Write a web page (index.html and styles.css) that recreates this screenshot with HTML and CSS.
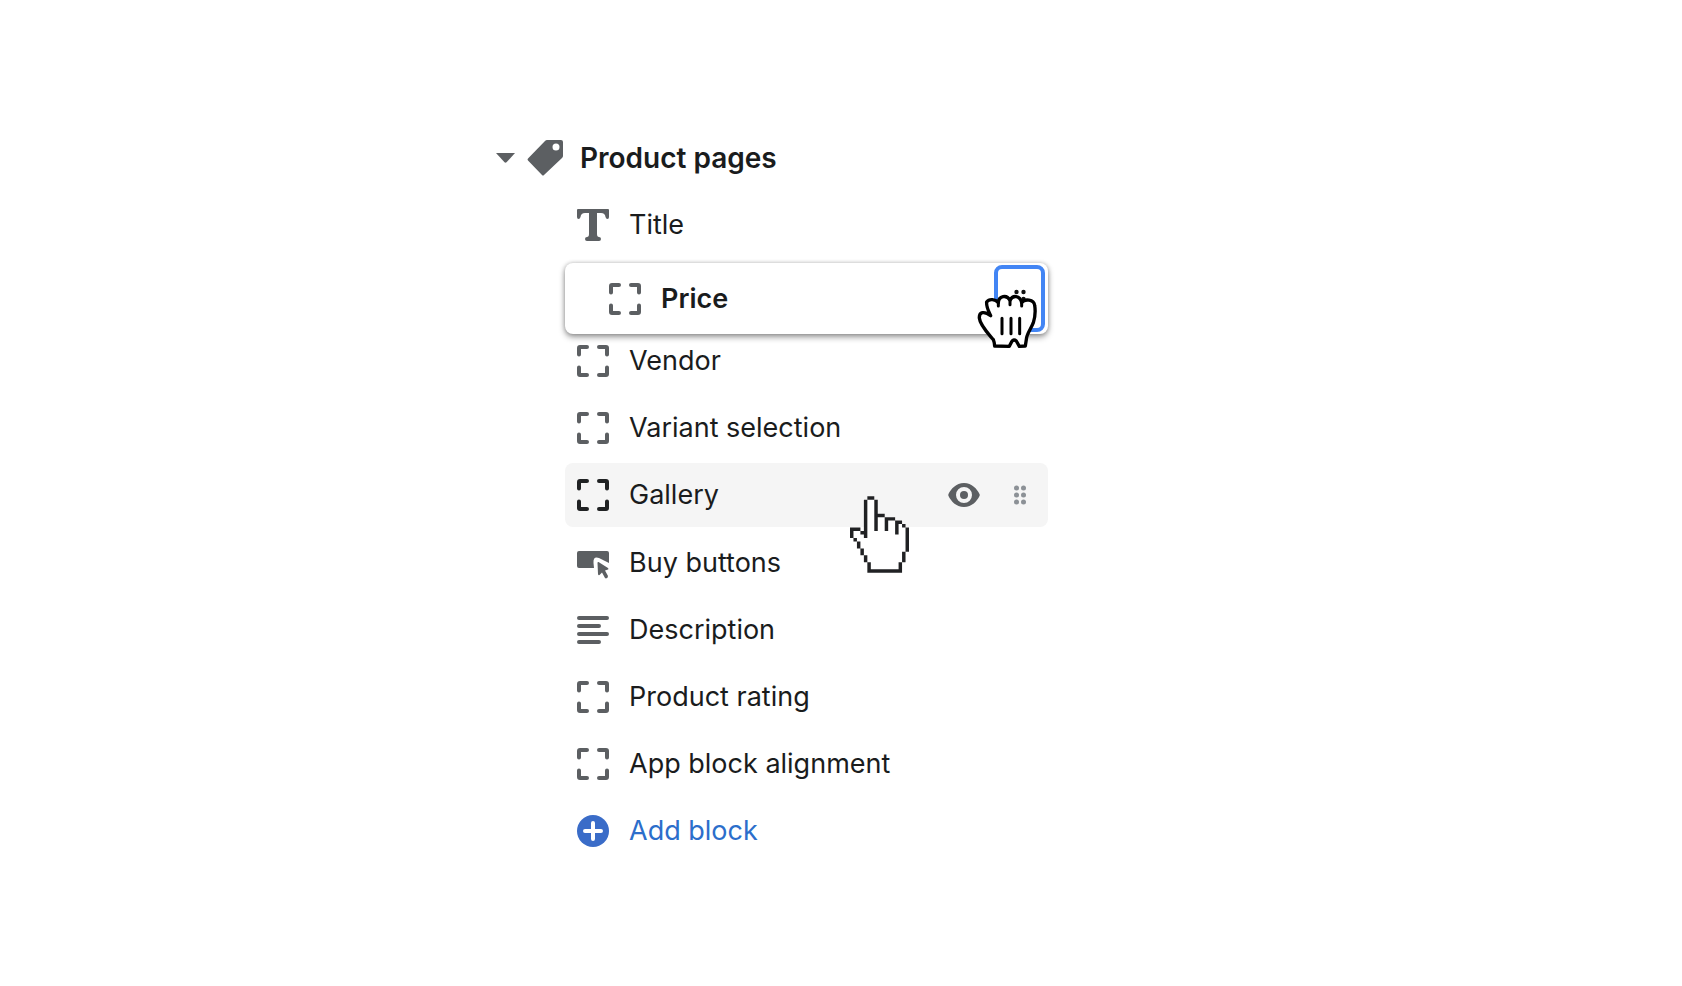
FILE: index.html
```html
<!DOCTYPE html>
<html lang="en">
<head>
<meta charset="utf-8">
<title>Product pages</title>
<link rel="stylesheet" href="styles.css">
</head>
<body>
<svg class="defs" aria-hidden="true">
  <symbol id="block" viewBox="0 0 32 32"><path d="M2 9.500V3Q2 2 3 2H10M22 2H29Q30 2 30 3V9.500M30 22.500V29Q30 30 29 30H22M10 30H3Q2 30 2 29V22.500" fill="none" stroke="currentColor" stroke-width="4" stroke-linecap="round" stroke-linejoin="round"/></symbol>
</svg>
<main class="page">
  <section class="tree">
    <h1 class="section">
      <button class="toggle" type="button" aria-expanded="true" aria-label="Collapse"><svg width="19" height="10" viewBox="0 0 19 10"><path d="M0 0H19L10.500 9.300Q9.500 10 8.500 9.300Z" fill="currentColor"/></svg></button>
      <svg class="tag" width="36" height="36" viewBox="0 0 36 36"><path fill-rule="evenodd" d="M20 0H34Q36 0 36 2V16Q36 17 35 18L17 35Q16 36 15 35L1 20.500Q0 19.500 1 18.500L18 1Q19 0 20 0ZM29 3.500a3.500 3.500 0 1 0 0 7a3.500 3.500 0 1 0 0-7Z" fill="currentColor"/></svg>
      <span>Product pages</span>
    </h1>
    <ul class="blocks">
      <li class="row"><svg class="icon" viewBox="0 0 32 32"><path d="M1 0H31Q32 0 32 1V8Q32 10 30.500 10Q29 10 28.500 8Q28 4 24 4H20V25Q20 28 22 28Q24 28 24 30Q24 32 22 32H10Q8 32 8 30Q8 28 10 28Q12 28 12 25V4H8Q4 4 3.500 8Q3 10 1.500 10Q0 10 0 8V1Q0 0 1 0Z" fill="currentColor"/></svg><span>Title</span></li>
      <li class="row lifted"><svg class="icon"><use href="#block"/></svg><span class="label">Price</span>
        <button class="handle focused" type="button" aria-label="Move Price"><svg width="12" height="20" viewBox="0 0 12 20"><g fill="currentColor"><circle cx="2.500" cy="3" r="2.200"/><circle cx="9.500" cy="3" r="2.200"/><circle cx="2.500" cy="10" r="2.200"/><circle cx="9.500" cy="10" r="2.200"/><circle cx="2.500" cy="17" r="2.200"/><circle cx="9.500" cy="17" r="2.200"/></g></svg></button>
        <svg class="cursor grab" viewBox="0 0 198 204"><path d="M62 186Q61 174 58 167C44 150 18 124 16 102C15 84 30 80 50 95C44 82 36 68 38 54C46 43 64 46 73 56C74 36 98 30 108 49C116 32 138 34 143 56C152 43 180 46 182 64C185 82 183 100 178 116C172 132 161 146 158 160L154 186L136 187L127 171Q119 164 113 173L106 187Z" fill="#fff" stroke="#000" stroke-width="10" stroke-linejoin="round"/><path d="M73 56V66M108 49V62M143 56V66M84 103V149M111 103V149M137 103V149" stroke="#000" stroke-width="9" stroke-linecap="round"/></svg>
      </li>
      <li class="row"><svg class="icon"><use href="#block"/></svg><span>Vendor</span></li>
      <li class="row"><svg class="icon"><use href="#block"/></svg><span>Variant selection</span></li>
      <li class="row hovered"><svg class="icon"><use href="#block"/></svg><span class="label">Gallery</span>
        <button class="view" type="button" aria-label="Hide Gallery"><svg width="32" height="24" viewBox="0 0 32 24"><path fill-rule="evenodd" d="M0.500 11C3 6 8 0 16 0S29 6 31.500 11Q32 12 31.500 13C29 18 24 24 16 24S3 18 0.500 13Q0 12 0.500 11ZM16 4a8 8 0 1 0 0 16a8 8 0 1 0 0-16Z" fill="currentColor"/><circle cx="16" cy="12" r="4" fill="currentColor"/></svg></button>
        <button class="handle" type="button" aria-label="Move Gallery"><svg width="12" height="20" viewBox="0 0 12 20"><g fill="currentColor"><circle cx="2.500" cy="3" r="2.500"/><circle cx="9.500" cy="3" r="2.500"/><circle cx="2.500" cy="10" r="2.500"/><circle cx="9.500" cy="10" r="2.500"/><circle cx="2.500" cy="17" r="2.500"/><circle cx="9.500" cy="17" r="2.500"/></g></svg></button>
        <svg class="cursor point" viewBox="0 0 17 22"><path d="M5 0H7V1H8V5H10V6H13V7H15V8H16V9H17V16H16V19H15V22H5V19H4V17H3V15H2V13H1V12H0V9H3V10H4V1H5Z" fill="#fff"/><path d="M5 0H7V1H5ZM4 1H5V12H4V11H3V10H4ZM7 1H8V5H10V6H8V10H7ZM10 6H13V7H11V10H10ZM13 7H15V8H14V11H13ZM15 8H16V9H15ZM16 9H17V16H16ZM15 16H16V19H15ZM14 19H15V22H5V19H6V21H14ZM0 9H3V10H1V12H0ZM1 12H2V13H1ZM2 13H3V15H2ZM3 15H4V17H3ZM4 17H5V19H4Z" fill="#202123"/></svg>
      </li>
      <li class="row"><svg class="icon" viewBox="0 0 32 32"><path d="M2 4H30Q32 4 32 6V16L22 11Q16 9 16.500 16L17 21H2Q0 21 0 19V6Q0 4 2 4Z" fill="currentColor"/><path d="M21.500 15L31 21Q32 22 31 22.500L28 23.500L31 29Q31 31 29 31.500L28 31L25 25.500L22.500 28Q21 28.500 21 27L20.500 16Q20.500 14.500 21.500 15Z" fill="currentColor"/></svg><span>Buy buttons</span></li>
      <li class="row"><svg class="icon" viewBox="0 0 32 32"><path d="M2 4H30M2 12H22M2 20H30M2 28H22" stroke="currentColor" stroke-width="4" stroke-linecap="round"/></svg><span>Description</span></li>
      <li class="row"><svg class="icon"><use href="#block"/></svg><span>Product rating</span></li>
      <li class="row"><svg class="icon"><use href="#block"/></svg><span>App block alignment</span></li>
      <li><button class="row add" type="button"><svg class="icon" viewBox="0 0 32 32"><circle cx="16" cy="16" r="16" fill="currentColor"/><path d="M16 8V24M8 16H24" stroke="#fff" stroke-width="4" stroke-linecap="round"/></svg><span>Add block</span></button></li>
    </ul>
  </section>
</main>
</body>
</html>
```
FILE: styles.css
```css
* { box-sizing: border-box; }
body { margin: 0; background: #fff; color: #1a1c1d; font: 400 27px/36px Inter, "Liberation Sans", sans-serif; }
button { margin: 0; padding: 0; border: 0; background: none; font: inherit; color: inherit; cursor: pointer; }
svg { display: block; flex: none; }
.defs { position: absolute; width: 0; height: 0; }

.page { display: flex; justify-content: center; padding: 126px 64px; }
.tree { width: 552px; margin-right: 138px; }

.section { display: flex; align-items: center; height: 64px; margin: 0 0 3px; font-size: 28px; font-weight: 600; }
.toggle { width: 19px; margin-right: 12px; color: #5c5f62; }
.tag { margin-right: 17px; color: #5c5f62; }

.blocks { display: flex; flex-direction: column; gap: 3px; margin: 0 0 0 69px; padding: 0; list-style: none; }
.row { position: relative; display: flex; align-items: center; gap: 20px; width: 100%; height: 64px; padding: 0 3px 0 12px; border-radius: 8px; text-align: left; }
.icon { width: 32px; height: 32px; color: #5c5f62; }
.label { flex: 1; }

.lifted { z-index: 1; height: 71px; margin: 3px 0 -8px; padding-left: 44px; background: #fff; font-weight: 600; box-shadow: 0 0 4px rgba(0, 0, 0, 0.2), 0 3px 6px rgba(0, 0, 0, 0.4); }
.hovered { z-index: 1; margin-bottom: 1px; background: #f5f5f5; }
.hovered .icon { color: #202223; }

.handle { display: flex; align-items: center; justify-content: center; width: 50px; height: 58px; color: #8c9196; }
.focused { width: 51px; height: 67px; border: 4px solid #4285f4; border-radius: 8px; color: #111; }
.view { margin-right: -5px; color: #5c5f62; }

.cursor { position: absolute; pointer-events: none; }
.grab { right: 8px; top: 21px; width: 66px; height: 68px; }
.point { right: 139px; top: 33px; width: 59px; height: 77px; }

.add { color: #2c6ecb; }
.add .icon { color: #3a6cc8; }
```
